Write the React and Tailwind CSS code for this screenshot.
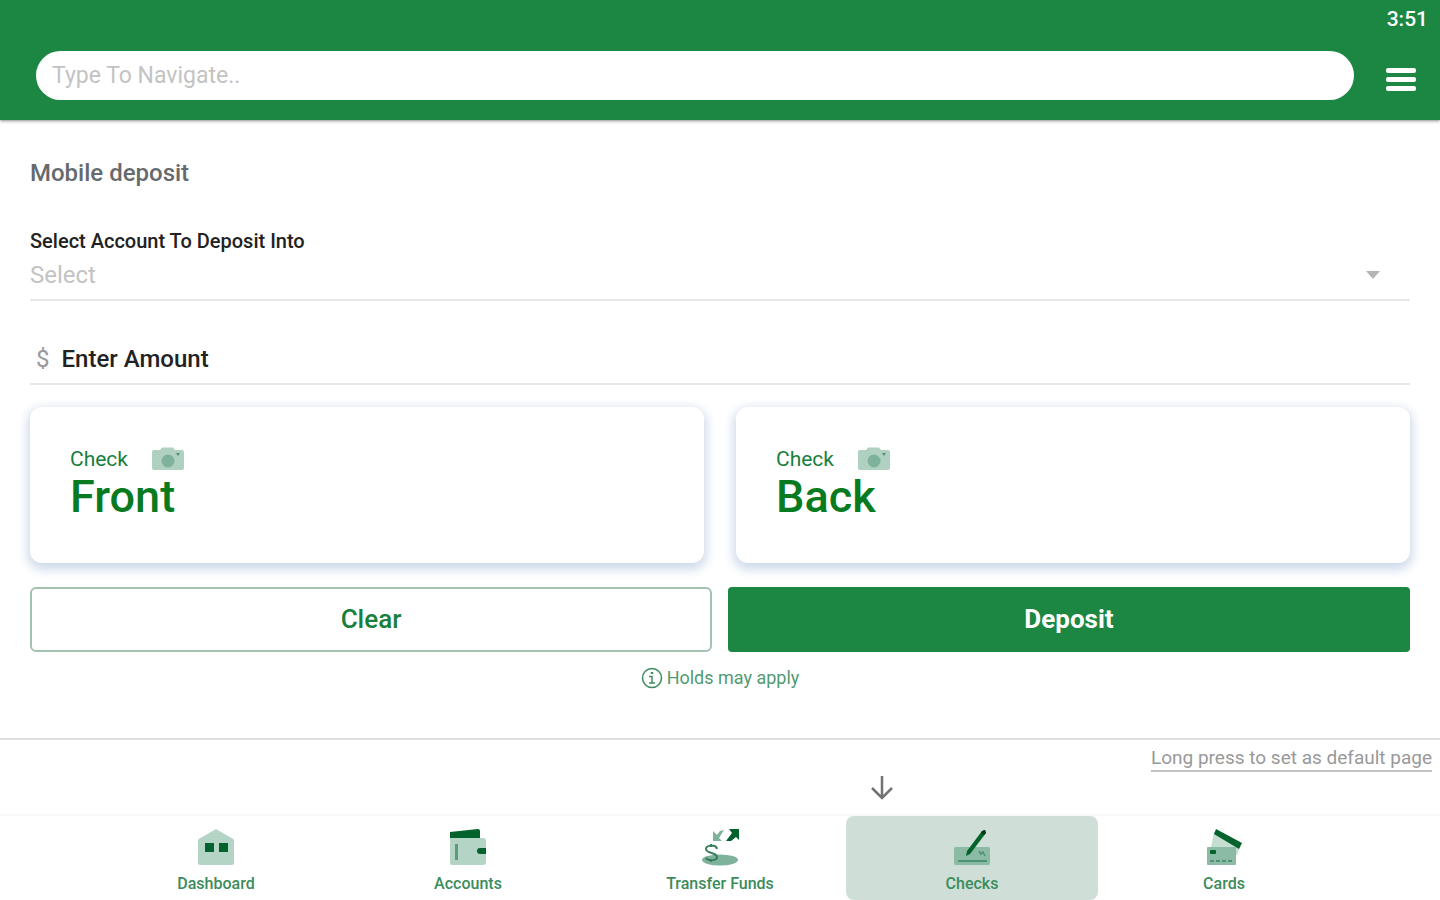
import { useState } from "react";

function CameraIcon() {
  return (
    <svg width="32" height="24" viewBox="0 0 32 24" aria-hidden="true">
      <path d="M2 3h6l2-2.500h11L23 3h7a2 2 0 0 1 2 2v16a2 2 0 0 1-2 2H2a2 2 0 0 1-2-2V5a2 2 0 0 1 2-2z" fill="#b0d1c2" />
      <circle cx="16" cy="14" r="6.500" fill="#7fb29b" />
      <path d="M24 6h4l-2 3z" fill="#4c9273" />
    </svg>
  );
}

function DashboardIcon() {
  return (
    <svg width="38" height="38" viewBox="0 0 38 38" aria-hidden="true">
      <path d="M19 1 36 11a2 2 0 0 1 1 2v22a2 2 0 0 1-2 2H3a2 2 0 0 1-2-2V13a2 2 0 0 1 1-2z" fill="#b4d4c6" />
      <path d="M8 15h9v9H8zM22 15h9v9h-9z" fill="#04622c" />
    </svg>
  );
}

function AccountsIcon() {
  return (
    <svg width="38" height="38" viewBox="0 0 38 38" aria-hidden="true">
      <path d="M1 4 29 1a2 2 0 0 1 2 2v8H1z" fill="#04622c" />
      <path d="M1 10h33a3 3 0 0 1 3 3v21a3 3 0 0 1-3 3H3a2 2 0 0 1-2-2z" fill="#b4d4c6" />
      <path d="M6 16h3v16H6z" fill="#5b9a7b" />
      <path d="M31 20h6v6h-6a3 3 0 0 1 0-6z" fill="#04622c" />
    </svg>
  );
}

function TransferIcon() {
  return (
    <svg width="38" height="38" viewBox="0 0 38 38" aria-hidden="true">
      <ellipse cx="19" cy="32" rx="18" ry="5.500" fill="#7fb29b" />
      <path d="M12 3v10h9l-3-3 5-8-4 1-3 4z" fill="#7fb29b" />
      <path d="M28 1h10v11l-3-3-5 4h-5l6-8z" fill="#04622c" />
      <path d="M16 21c-1-5-11-4-11 0 0 5 11 3 11 8 0 4-9 4-11 1M10 16v3M10 31v3" fill="none" stroke="#397e5b" strokeWidth="2" />
    </svg>
  );
}

function ChecksIcon() {
  return (
    <svg width="38" height="38" viewBox="0 0 38 38" aria-hidden="true">
      <rect x="1" y="19" width="36" height="18" rx="2" fill="#8bbba5" />
      <path d="M5 33h29" stroke="#4c9273" strokeWidth="2" />
      <path d="m26 23 2 3 2-2 2 4" fill="none" stroke="#4c9273" strokeWidth="1.500" />
      <path d="m29 3 3-1 1 3-16 21-4 2 1-5z" fill="#04622c" />
      <path d="m29 3 3-1 1 3-2 2-3-2z" fill="#033a19" />
    </svg>
  );
}

function CardsIcon() {
  return (
    <svg width="38" height="38" viewBox="0 0 38 38" aria-hidden="true">
      <path d="m9 4 26 15-3 8-26-8z" fill="#c4ded2" />
      <path d="m11 1 26 14-3 6L9 6z" fill="#04622c" />
      <rect x="2" y="19" width="29" height="18" rx="1" fill="#8bbba5" />
      <rect x="5" y="22" width="6" height="4" rx="1" fill="#04622c" />
      <path d="M5 33h24" stroke="#4c9273" strokeWidth="2" strokeDasharray="4 2" />
    </svg>
  );
}

const tabs = [
  { name: "Dashboard", icon: DashboardIcon },
  { name: "Accounts", icon: AccountsIcon },
  { name: "Transfer Funds", icon: TransferIcon },
  { name: "Checks", icon: ChecksIcon },
  { name: "Cards", icon: CardsIcon },
];

function CheckCard({ side }) {
  return (
    <button
      type="button"
      className="flex h-[156px] flex-col items-start rounded-xl bg-white px-10 pt-10 text-left shadow-[0_4px_12px_2px_#c9d6e8]"
    >
      <span className="flex h-6 items-center gap-6 text-[21px] leading-6 text-[#187f3d]">
        Check
        <CameraIcon />
      </span>
      <span className="text-[45px] leading-[52px] font-medium text-[#087a20]">{side}</span>
    </button>
  );
}

export default function App() {

  const [query, setQuery] = useState("");
  const [account, setAccount] = useState("");
  const [amount, setAmount] = useState("");
  const [active, setActive] = useState("Checks");

  const handleClear = () => {
    setAccount("");
    setAmount("");
  };

  return (
    <div className="flex min-h-screen flex-col bg-white font-[Roboto,sans-serif]">

      <header className="bg-[#1c8743] pb-5 shadow-[0_1px_3px_#8b8b8b]">
        <div className="flex h-10 items-center justify-end px-3 text-[21px] font-medium text-white">
          3:51
        </div>
        <div className="flex items-end gap-8 pt-[11px] pr-6 pl-9">
          <input
            type="text"
            aria-label="Type To Navigate"
            placeholder="Type To Navigate.."
            value={query}
            onChange={(e) => setQuery(e.target.value)}
            className="h-[49px] min-w-0 flex-1 rounded-full bg-white px-4 text-[23px] outline-none placeholder:text-[#c3c3c3]"
          />
          <button type="button" aria-label="Menu" className="flex h-[42px] w-[30px] flex-col justify-center gap-1">
            <span className="h-[5px] rounded-xs bg-white" />
            <span className="h-[5px] rounded-xs bg-white" />
            <span className="h-[5px] rounded-xs bg-white" />
          </button>
        </div>
      </header>

      <main className="flex-1 px-[30px] pt-[37px]">
        <h1 className="text-2xl leading-8 font-medium text-[#666a6e]">Mobile deposit</h1>

        <div className="mt-10 border-b-2 border-[#e8e8e8]">
          <label htmlFor="account" className="block text-xl leading-6 font-medium text-[#222]">
            Select Account To Deposit Into
          </label>
          <div className="flex items-center pt-1 pb-[6px] pr-[30px]">
            <select
              id="account"
              value={account}
              onChange={(e) => setAccount(e.target.value)}
              className="h-9 flex-1 appearance-none bg-transparent text-2xl text-[#c3c3c3] outline-none"
            >
              <option value="">Select</option>
              <option value="checking">Checking</option>
              <option value="savings">Savings</option>
            </select>
            <svg width="14" height="8" viewBox="0 0 14 8" aria-hidden="true">
              <path d="M0 0h14L7 8z" fill="#b5b5b5" />
            </svg>
          </div>
        </div>

        <div className="mt-9 flex h-12 items-center gap-3 border-b-2 border-[#e8e8e8] pb-[2px] pl-[6px]">
          <label htmlFor="amount" className="text-2xl text-[#999]">$</label>
          <input
            id="amount"
            type="text"
            placeholder="Enter Amount"
            value={amount}
            onChange={(e) => setAmount(e.target.value)}
            className="min-w-0 flex-1 text-2xl font-medium outline-none placeholder:text-[#222]"
          />
        </div>

        <div className="mt-[22px] grid grid-cols-2 gap-8">
          <CheckCard side="Front" />
          <CheckCard side="Back" />
        </div>

        <div className="mt-6 grid grid-cols-2 gap-4">
          <button
            type="button"
            onClick={handleClear}
            className="h-[65px] rounded-md border-2 border-[#a3c2b0] text-[26px] font-medium text-[#187f3d]"
          >
            Clear
          </button>
          <button type="button" className="h-[65px] rounded-sm bg-[#1c8743] text-[26px] font-bold text-white">
            Deposit
          </button>
        </div>

        <p className="mt-3 flex items-center justify-center gap-1 text-lg leading-7 text-[#529a70]">
          <svg width="22" height="22" viewBox="0 0 22 22" fill="none" stroke="#3d8e5e" strokeWidth="1.500" aria-hidden="true">
            <circle cx="11" cy="11" r="9.500" />
            <path d="M8 9.500h3V16M8 16h6" />
            <path d="M11 5v2" strokeWidth="2.500" />
          </svg>
          Holds may apply
        </p>
      </main>

      <footer className="border-t-2 border-[#e0e0e0]">
        <div className="flex justify-end px-2 pt-[6px]">
          <a href="#default" className="border-b-2 border-[#c2c2c2] text-[19px] leading-6 text-[#999]">
            Long press to set as default page
          </a>
        </div>
        <div className="grid h-[42px] grid-cols-5 px-[90px]">
          <svg
            className="col-start-4 ml-6"
            width="24"
            height="30"
            viewBox="0 0 24 30"
            fill="none"
            stroke="#707274"
            strokeWidth="2.500"
            aria-hidden="true"
          >
            <path d="M12 4v22M2 16l10 10 10-10" />
          </svg>
        </div>
        <nav className="grid grid-cols-5 border-t-2 border-[#f7f7f7] px-[90px]">
          {tabs.map(({ name, icon: Icon }) => (
            <button
              key={name}
              type="button"
              onClick={() => setActive(name)}
              className={`flex h-[84px] flex-col items-center gap-2 rounded-lg pt-3 text-base leading-5 font-medium text-[#3b8c5b] ${
                active === name ? "bg-[#cfdfd7]" : ""
              }`}
            >
              <Icon />
              {name}
            </button>
          ))}
        </nav>
      </footer>

    </div>
  );
}
